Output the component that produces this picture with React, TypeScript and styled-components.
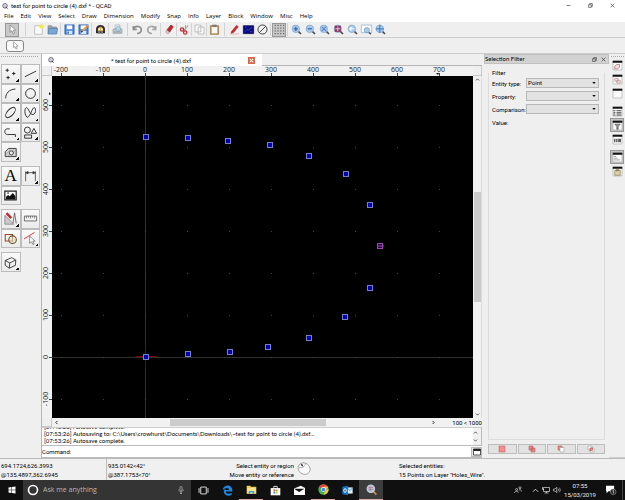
import React from "react";
import styled, { createGlobalStyle, css } from "styled-components";

const Global = createGlobalStyle`
  * { box-sizing: border-box; }
  html, body { margin: 0; padding: 0; }
  body { background: #efefef; color: #000; font: 6px/9px Roboto, "Open Sans", sans-serif; }
  button, input, select { font: inherit; color: inherit; margin: 0; padding: 0; }
`;

/* ---------- icons ---------- */

const Svg = styled.svg<{ $size?: number }>`
  display: block;
  flex: none;
  width: ${(p) => p.$size ?? 12}px;
  height: ${(p) => p.$size ?? 12}px;
  overflow: visible;
`;

const lens = (inner: React.ReactNode) => (
  <>
    <path d="M10 10l4.5 4.5" stroke="#4a4a4a" strokeWidth="2.4" />
    <circle cx="7" cy="7" r="5.4" fill="#a9cbee" stroke="#86a9cf" strokeWidth="1.2" />
    {inner}
  </>
);

const docFrame = (inner: React.ReactNode) => (
  <>
    <path d="M1.5 2h13v12.500h-13z" fill="#fff" stroke="#aaa" />
    <path d="M1 1h14v3h-14z" fill="#111" />
    {inner}
  </>
);

const icons: Record<string, React.ReactNode> = {
  app: (
    <>
      <circle cx="8" cy="7.500" r="6" fill="#eef" stroke="#334" strokeWidth="2" />
      <path d="M5 5h5v5h-5z" fill="#c5cbdc" />
      <path d="M10 10l4.500 5" stroke="#334" strokeWidth="2.600" />
    </>
  ),
  cursor: <path d="M4.500 1.500v10.500l2.600-2.200 2 4.400 2-1-2-4.200 3.600-.2z" fill="#fff" stroke="#888" strokeWidth="1.200" />,
  newDoc: (
    <>
      <path d="M2.500 2.500h11v12.500h-11z" fill="#fbfbfb" stroke="#aaa" />
      <circle cx="12.500" cy="3.500" r="3.200" fill="#f4e74a" />
    </>
  ),
  open: (
    <>
      <path d="M1.500 2.500h5l1.500 2h6v9.500h-12.500z" fill="#9aa3a8" stroke="#7d868b" />
      <path d="M3 6.500h12.500l-1.500 8h-12.500z" fill="#78a6d8" stroke="#4c7eb8" />
    </>
  ),
  save: (
    <>
      <path d="M1.500 1.500h13v13h-13z" fill="#4f8be0" stroke="#2a5fb4" strokeWidth="1.500" />
      <path d="M4 2h8v5.500h-8z" fill="#fff" />
      <path d="M4 10h8v4.500h-8z" fill="#dbe6f6" />
      <path d="M5 11h2v3h-2z" fill="#2a5fb4" />
    </>
  ),
  saveAs: (
    <>
      <path d="M1.500 1.500h13v13h-13z" fill="#4f8be0" stroke="#2a5fb4" strokeWidth="1.500" />
      <path d="M4 2h8v5.500h-8z" fill="#fff" />
      <path d="M4 10h8v4.500h-8z" fill="#dbe6f6" />
      <path d="M6 10.500l8.500-8.500" stroke="#e99a2e" strokeWidth="2.600" />
      <path d="M4.500 12l2-2" stroke="#333" strokeWidth="2" />
    </>
  ),
  preview: (
    <>
      <path d="M1.500 13.500v-6c0-8 13-8 13 0v6z" fill="#2c2926" />
      <path d="M4 10.500c0-5 2-6.500 4-6.500s4 1.500 4 6.500z" fill="#d4aa4e" />
      <path d="M4.500 14v-4h3v4zM8.500 14v-4h3v4z" fill="#777" />
      <circle cx="6" cy="7.500" r="1.300" fill="#fff" />
      <circle cx="10" cy="7.500" r="1.300" fill="#fff" />
    </>
  ),
  print: (
    <>
      <path d="M4.500 1.500h7v6h-7z" fill="#f6fafe" stroke="#9ab" />
      <path d="M1.500 7.500h13v6h-13z" fill="#c9ced2" stroke="#8a9298" />
      <circle cx="9" cy="7" r="3.500" fill="#b7d4ee" stroke="#8aa" />
      <path d="M3 11.500h10" stroke="#7d868b" />
    </>
  ),
  undo: <path d="M2 3v5h5M2.500 7.500c2-6 11.500-5 11 1.500-.2 3-3 5-6 4.500" fill="none" stroke="#8c8c8c" strokeWidth="2.400" />,
  redo: <path d="M14 3v5h-5M13.500 7.500c-2-6-11.500-5-11 1.500 .2 3 3 5 6 4.500" fill="none" stroke="#a5a5a5" strokeWidth="2.400" />,
  eraser: (
    <>
      <path d="M4 9l6-7.500 3.500 2.500-5.500 8z" fill="#c6262e" stroke="#8c1a20" />
      <path d="M4 9l4 3-2 2.500-3.500-2.500z" fill="#f4c9cb" stroke="#999" />
    </>
  ),
  cut: (
    <>
      <path d="M13.500 2l-6 7M9.500 1.500l-.5 9" stroke="#aaa" strokeWidth="1.600" />
      <circle cx="4.500" cy="8" r="2.400" fill="none" stroke="#c6262e" strokeWidth="1.800" />
      <circle cx="9" cy="12.500" r="2.400" fill="none" stroke="#c6262e" strokeWidth="1.800" />
    </>
  ),
  copy: <path d="M1.500 1.500h8.500v10h-8.500zM6 4.500h8.500v10h-8.500z" fill="#fafafa" stroke="#aaa" />,
  paste: (
    <>
      <path d="M2 2.500h12v12.500h-12z" fill="#c69c5c" stroke="#8b6a38" />
      <path d="M4 4.500h8v9h-8z" fill="#f8f8f6" />
      <path d="M5 1h6v3h-6z" fill="#777" />
    </>
  ),
  pen: (
    <>
      <path d="M4 10.500l7-8.500 2.500 2-7 8.500-3.500 1z" fill="#d0242c" stroke="#8c1a20" strokeWidth=".8" />
      <path d="M1.500 14.500h13" stroke="#d99" />
    </>
  ),
  blueprint: (
    <>
      <path d="M.5 2.500h15v11.500h-15z" fill="#0a0a86" stroke="#04043c" />
      <path d="M3 11l3-3 2 1 5-4M3 5h2M10 11h3" stroke="#4a56c0" fill="none" />
    </>
  ),
  draft: (
    <>
      <circle cx="8" cy="8" r="6.600" fill="none" stroke="#222" strokeWidth="1.200" />
      <path d="M3.300 12.700l9.400-9.400" stroke="#222" strokeWidth="1.200" />
    </>
  ),
  grid: (
    <path
      d="M1 2h14M1 6h14M1 10h14M1 14h14"
      stroke="#555"
      strokeWidth="1.500"
      strokeDasharray="1.500 2.600"
    />
  ),
  zoomIn: lens(<path d="M4 7h6M7 4v6" stroke="#2e66b4" strokeWidth="1.800" />),
  zoomOut: lens(<path d="M4 7h6" stroke="#2e66b4" strokeWidth="1.800" />),
  zoomAuto: lens(<path d="M4 4l6 6M10 4l-6 6" stroke="#4a82c8" strokeWidth="1.500" />),
  zoomSel: lens(
    <>
      <path d="M2.500 2.500h9v9h-9z" fill="#8c3560" />
      <path d="M3.500 7h7M7 3.500v7" stroke="#e5d4e4" strokeWidth="1.300" />
    </>
  ),
  zoomPrev: lens(<path d="M10 7h-5.500M6.500 4.500l-2.500 2.500 2.500 2.500" stroke="#fff" fill="none" strokeWidth="1.500" />),
  zoomWin: (
    <>
      <path d="M.5 1.500h15v11h-15z" fill="#fff" stroke="#8aa8c8" />
      <path d="M11 12l3.500 3" stroke="#4a4a4a" strokeWidth="2" />
      <circle cx="8.500" cy="9" r="3.800" fill="#a9cbee" stroke="#6a95c5" />
    </>
  ),
  zoomPan: lens(<path d="M1 7h12M7 1v12" stroke="#4a82c8" strokeWidth="1.800" />),
  points: <path d="M2 4h4M4 2v4M10 8h4M12 6v4M3 13h4M5 11v4" stroke="#222" strokeWidth="1.200" />,
  line: <path d="M1 12l14-7" stroke="#333" strokeWidth="1.200" />,
  arc: <path d="M2 14c0-6 4-11 12-11.500" fill="none" stroke="#333" strokeWidth="1.200" />,
  circle: <circle cx="8" cy="8" r="6" fill="none" stroke="#333" strokeWidth="1.200" />,
  ellipse: <ellipse cx="8" cy="8" rx="7.800" ry="3.800" transform="rotate(-48 8 8)" fill="none" stroke="#333" strokeWidth="1.200" />,
  spline: <path d="M4 14c-4-3-3.500-12-1-12s4 9 8 8.500c4-.5 4-8.500 1.500-8.500s-4.500 11-8.500 12z" fill="none" stroke="#333" strokeWidth="1.200" />,
  polyline: <path d="M7 3.500h-3c-4 0-4 7 0 7h10v3" fill="none" stroke="#333" strokeWidth="1.200" />,
  shapes: (
    <path
      d="M.5 5a3.700 3.700 0 1 0 7.400 0a3.700 3.700 0 1 0-7.400 0zM12.200 3l3.300 6h-6.600zM.8 11h8.500v4h-8.500z"
      fill="none"
      stroke="#333"
      strokeWidth="1.200"
    />
  ),
  hatch: (
    <>
      <path d="M1.500 13v-6l4-4h9.500v10z" fill="#d4d4d4" stroke="#333" strokeWidth="1.100" />
      <path d="M2 11l6-7M4 13l8-9M8 13l6-8" stroke="#888" strokeWidth=".7" />
      <circle cx="9" cy="8.500" r="2.500" fill="#eee" stroke="#333" />
    </>
  ),
  dimension: (
    <path d="M2 3v12M14 3v12M2 4.500h12M2 4.500l3-1.500v3zM14 4.500l-3-1.500v3z" fill="#222" stroke="#444" />
  ),
  image: (
    <>
      <path d="M1 2.500h14v11h-14z" fill="#fff" stroke="#222" strokeWidth="1.500" />
      <path d="M2.500 12.500v-3l2.500-2 2 1.500 4-4 3 4v3.500z" fill="#111" />
      <circle cx="5" cy="5" r="1" fill="#111" />
    </>
  ),
  modify: (
    <>
      <path d="M1 4v11h11z" fill="#c9c9c9" stroke="#888" />
      <path d="M3 1.500l6 6" stroke="#c6262e" strokeWidth="3" />
      <path d="M13 1l-2 13M13 1l2 13" stroke="#555" fill="none" />
    </>
  ),
  ruler: (
    <>
      <path d="M.5 5h15v6h-15z" fill="#f4f4f4" stroke="#555" />
      <path d="M3 5v3M5.500 5v2M8 5v3M10.500 5v2M13 5v3" stroke="#555" strokeWidth=".8" />
    </>
  ),
  combine: (
    <>
      <path d="M1.500 3h9v8h-9z" fill="none" stroke="#9a4a2c" strokeWidth="1.300" />
      <circle cx="10.500" cy="9.500" r="4.700" fill="#e8e0b8" fillOpacity=".6" stroke="#5c5530" strokeWidth="1.300" />
    </>
  ),
  trim: (
    <>
      <path d="M0 8.500l13-8" stroke="#e0333c" strokeWidth="1.200" />
      <path d="M7 5v9l2.200-2 1.800 3.500 1.500-.8-1.700-3.500h2.800z" fill="#fff" stroke="#777" />
    </>
  ),
  cube: <path d="M1.500 5.500l8-3.500 5 3-.5 6.500-7.500 3.500-5-3.500zM1.500 5.500l5.500 3 7.500-3.500M7 8.500l-.5 6.500" fill="none" stroke="#333" strokeWidth="1.100" />,
  blocks: docFrame(<path d="M4 9l3-2.500h4v4l-3 2.500h-4z" fill="#f3dede" stroke="#a66" />),
  layers: docFrame(<path d="M4 6.500h5v4h-5zM7 9h5v4h-5z" fill="#eee" stroke="#b88" />),
  blank: docFrame(<path d="M4 7h8v5h-8z" fill="none" stroke="#eee" />),
  list: docFrame(<path d="M2 7h3M6.500 7h7M2 10h3M6.500 10h7M2 13h3M6.500 13h7" stroke="#444" strokeWidth="1.500" />),
  filter: docFrame(<path d="M4 6h8l-3 3.500v4h-2v-4z" fill="#999" stroke="#555" />),
  library: docFrame(<path d="M3 7h2v5h-2zM6 7h2v5h-2zM9 7h4v5h-4z" fill="#555" />),
  command: docFrame(<path d="M3 6.500h3M3 9h5M3 11.500h9" stroke="#777" />),
  clip: docFrame(<path d="M4 6.500h8v7h-8zM6 5h4v2h-4z" fill="#ddd1b0" stroke="#8b7a50" />),
  sel1: <path d="M2 2h12v12h-12z" fill="#f98a8d" stroke="#b95a5e" />,
  sel2: (
    <>
      <path d="M2 2h8v8h-8zM6 6h8v8h-8z" fill="#f2898c" stroke="#a04a4e" />
      <path d="M6 6h4v4h-4z" fill="#d9666a" />
    </>
  ),
  sel3: (
    <>
      <path d="M2 2h8v8h-8z" fill="#f2898c" stroke="#a04a4e" />
      <path d="M6 5h8v9h-8z" fill="#fff" stroke="#888" />
    </>
  ),
  sel4: (
    <>
      <path d="M2 2h8v8h-8zM6 6h8v8h-8z" fill="#fff" stroke="#888" />
      <path d="M6 6h5v5h-5z" fill="#f2898c" stroke="#a04a4e" />
    </>
  ),
  minimize: <path d="M2 8h12" stroke="#222" strokeWidth="1.800" />,
  restore: <path d="M2 5.500h8.500v8.500h-8.500zM5 5v-3h9v9h-3" fill="none" stroke="#222" strokeWidth="1.800" />,
  close: <path d="M2 2l12 12M14 2l-12 12" stroke="#222" strokeWidth="2" />,
  closeWhite: <path d="M4 4l8 8M12 4l-8 8" stroke="#fff" strokeWidth="2.400" />,
  up: <path d="M3 11l5-5 5 5" fill="none" stroke="#333" strokeWidth="2.600" />,
  down: <path d="M3 5l5 5 5-5" fill="none" stroke="#333" strokeWidth="2.600" />,
  left: <path d="M11 3l-5 5 5 5" fill="none" stroke="#111" strokeWidth="2.800" />,
  right: <path d="M5 3l5 5-5 5" fill="none" stroke="#111" strokeWidth="2.800" />,
  arrow: <path d="M1 4h14l-7 8z" fill="#111" />,
  panel: (
    <>
      <path d="M1 2h14v12h-14z" fill="#fff" stroke="#222" strokeWidth="1.500" />
      <path d="M1 2h14v4h-14z" fill="#222" />
    </>
  ),
  mouse: (
    <>
      <ellipse cx="8.500" cy="8.500" rx="7.200" ry="6.300" transform="rotate(35 8 8)" fill="#f9f9f9" stroke="#999" strokeWidth=".9" />
      <path d="M2.500 7.500c3 1 6.500-1 7.500-5M6.500 7l-2.500-4" fill="none" stroke="#999" strokeWidth=".9" />
      <path d="M5 3.500l1.500 2.200" stroke="#333" strokeWidth="1.500" />
    </>
  ),
  windows: <path d="M1 3l6-.9v5.500h-6zM8 2l7-1v6.600h-7zM1 8.500h6v5.500l-6-.9zM8 8.500h7v6.500l-7-1z" fill="#fff" />,
  cortana: <circle cx="8" cy="8" r="6" fill="none" stroke="#fff" strokeWidth="2.200" />,
  mic: <path d="M6 2.500c0-2 4-2 4 0v5c0 2-4 2-4 0zM3.500 7c0 6 9 6 9 0M8 11.500v3.500M6 15h4" fill="none" stroke="#ccc" strokeWidth="1.200" />,
  taskview: <path d="M4 3h8v10h-8zM1.500 4.500v7M14.500 4.500v7" fill="none" stroke="#ddd" strokeWidth="1.400" />,
  edge: (
    <path
      d="M1 7.500c1-9 14-9 14 .5v1.500h-9.500c.3 3.500 5 4 8.500 2v3c-5 2.500-11.500.5-11.500-5 0-2 1-3.500 3-4.500-.8 1-.8 1.800-.8 2.200h5.500c0-4-5.500-4-9.200.3z"
      fill="#1f86e0"
    />
  ),
  folder: (
    <>
      <path d="M1 2.500h5l1.500 1.500h7.500v10h-14z" fill="#f2cc58" />
      <path d="M2 6h12v8h-12z" fill="#fbe694" />
      <path d="M4 14v-4h8v4h-2.500v-2h-3v2z" fill="#3f9ad8" />
    </>
  ),
  store: (
    <>
      <path d="M5.500 5v-3h5v3" fill="none" stroke="#fff" strokeWidth="1.200" />
      <path d="M1 4.500h14v10.500h-14z" fill="#fff" />
      <path d="M5 6.500h2.700v2.700h-2.700z" fill="#e2502c" />
      <path d="M8.300 6.500h2.700v2.700h-2.700z" fill="#7cb82f" />
      <path d="M5 9.800h2.700v2.700h-2.700z" fill="#2c9fe0" />
      <path d="M8.300 9.800h2.700v2.700h-2.700z" fill="#f3b52c" />
    </>
  ),
  mail: (
    <>
      <path d="M0 5l10-4 6 3.500v10h-16z" fill="#fff" />
      <path d="M0 5.500h15l-7.500 4.500z" fill="#111" />
    </>
  ),
  chrome: (
    <>
      <circle cx="8" cy="8" r="7.500" fill="#4caf50" />
      <path d="M8 8l-6.500-3.800c3-5 10-5 13 0z" fill="#e2453a" />
      <path d="M8 8h7.500c.3-1.500-.2-3-1-3.900h-6.500zM8 15.500l6.700-11.400c2.500 5-1 11.400-6.700 11.400z" fill="#fbc92f" />
      <circle cx="8" cy="8" r="3.500" fill="#fff" />
      <circle cx="8" cy="8" r="2.700" fill="#4286f0" />
    </>
  ),
  outlook: (
    <>
      <path d="M7 3.500h8.500v9h-8.500z" fill="#dbeafa" />
      <path d="M7 4l4.500 4 4-4" fill="none" stroke="#1272c6" />
      <path d="M.5 2.500l8-1.500v14l-8-1.500z" fill="#1272c6" />
      <ellipse cx="4.500" cy="8" rx="1.900" ry="2.600" fill="none" stroke="#fff" strokeWidth="1.300" />
    </>
  ),
  qcad: (
    <>
      <path d="M10.500 10.500l4.500 5" stroke="#c98f3c" strokeWidth="2.500" />
      <circle cx="7" cy="7" r="5.500" fill="#aebfe0" stroke="#ccd" strokeWidth="1.500" />
      <path d="M4 5h6M4 8h6M6 4v6" stroke="#c26a6a" />
    </>
  ),
  people: <path d="M1 14c1-5 7-5 7.500-.5M3.200 7a2 2 0 1 0 4 0a2 2 0 1 0-4 0M10 3.500a2 2 0 1 0 4 0a2 2 0 1 0-4 0M9.500 9c2-2.500 5-2 5.500 2" fill="none" stroke="#ddd" strokeWidth="1.400" />,
  chevron: <path d="M2 11l6-6 6 6" fill="none" stroke="#ddd" strokeWidth="2" />,
  network: <path d="M3 3h12v8h-12zM9 11v3M5 14h8M1 2v5h3" fill="none" stroke="#ddd" strokeWidth="1.400" />,
  sound: <path d="M1 6h3l3.500-3.500v11l-3.500-3.500h-3zM10 5.500c1.500 1.500 1.500 3.500 0 5M12.500 3.500c2.500 2.500 2.500 6.500 0 9" fill="none" stroke="#ddd" strokeWidth="1.300" />,
  action: (
    <>
      <path d="M0 1h13v9h-9l-3 3v-3h-1z" fill="#fff" />
      <circle cx="11.500" cy="11" r="4.500" fill="#222" stroke="#999" />
      <path d="M10.500 9.500l1.300-1v5" fill="none" stroke="#fff" />
    </>
  ),
};

const Icon = ({ name, size }: { name: string; size?: number }) => (
  <Svg viewBox="0 0 16 16" $size={size} aria-hidden="true">
    {icons[name]}
  </Svg>
);

/* ---------- frame ---------- */

const Page = styled.div`
  min-height: 100vh;
  display: flex;
  flex-direction: column;
`;

const PlainButton = styled.button`
  display: flex;
  align-items: center;
  justify-content: center;
  border: 0;
  background: none;
`;

const TitleBar = styled.header`
  display: flex;
  align-items: center;
  gap: 3px;
  height: 11px;
  padding: 0 10px 0 2px;
  background: #fff;
`;

const Title = styled.h1`
  flex: 1;
  margin: 0;
  font-size: 6px;
  font-weight: 400;
`;

const WindowButtons = styled.div`
  display: flex;
  gap: 17px;
`;

const MenuBar = styled.nav`
  display: flex;
  align-items: center;
  gap: 7px;
  height: 11px;
  padding-left: 4px;
  background: #fff;
  font-family: "Open Sans", sans-serif;
`;

const MenuItem = styled(PlainButton)`
  height: 9px;
  white-space: nowrap;
`;

const ToolBar = styled.div<{ $small?: boolean }>`
  display: flex;
  align-items: center;
  height: 16px;
  padding-left: ${(p) => (p.$small ? 6 : 5)}px;
  border-bottom: 1px solid #cdcdcd;
  background: #efefef;
`;

const ToolButton = styled(PlainButton)<{ $pressed?: boolean }>`
  width: 14px;
  height: 14px;
  ${(p) =>
    p.$pressed &&
    css`
      background: #c8c8c8;
      border: 1px solid #999;
    `}
`;

const ModeButton = styled(PlainButton)`
  width: 18px;
  height: 12px;
  border: 1px solid #888;
  border-radius: 3px;
  background: #f8f8f8;
`;

const Separator = styled.span<{ $width: number }>`
  width: ${(p) => p.$width}px;
  height: 13px;
  flex: none;
  background: linear-gradient(#d2d2d2, #d2d2d2) center / 1px 100% no-repeat;
`;

const Work = styled.div`
  flex: 1;
  display: flex;
  min-height: 0;
`;

/* ---------- left tools ---------- */

const ToolBox = styled.aside`
  display: flex;
  flex-direction: column;
  gap: 4px;
  width: 41px;
  padding: 2px 1px 0;
`;

const Grip = styled.span<{ $width: number; $height: number }>`
  width: ${(p) => p.$width}px;
  height: ${(p) => p.$height}px;
  border-top: 1px dotted #aaa;
`;

const ToolGroup = styled.div<{ $rows: number; $height: number }>`
  display: grid;
  grid-template: repeat(${(p) => p.$rows}, 1fr) / 1fr 1fr;
  height: ${(p) => p.$height}px;
`;

const BoxButton = styled(PlainButton)<{ $menu: boolean }>`
  border: 1px solid #bcbcbc;
  background: ${(p) => (p.$menu ? "linear-gradient(135deg, transparent 50%, #111 50%) right 1px bottom 1px / 3px 3px no-repeat, " : "")}
    linear-gradient(#f9f9f9, #ebebeb);
`;

const Letter = styled.span`
  font: 17px/17px "Liberation Serif", serif;
`;

/* ---------- document ---------- */

const Center = styled.main`
  flex: 1;
  min-width: 0;
  display: flex;
  flex-direction: column;
  border-left: 1px solid #b5b5b5;
  margin-right: 2px;
`;

const TabBar = styled.div`
  display: flex;
  height: 12px;
  border-bottom: 1px solid #b5b5b5;
`;

const Tab = styled.div`
  display: flex;
  align-items: center;
  flex: 0 1 220px;
  height: 12px;
  padding: 0 7px 0 6px;
  background: #fff;
`;

const TabTitle = styled.span`
  flex: 1;
  text-align: center;
`;

const TabClose = styled(PlainButton)`
  width: 7px;
  height: 7px;
  background: #d9694a;
`;

const Sheet = styled.div`
  flex: 1;
  display: grid;
  grid-template: 10px minmax(0, 1fr) 9px / 10px minmax(0, 1fr) 9px;
  min-height: 0;
`;

const Drawing = styled.svg<{ $black?: boolean }>`
  display: block;
  width: 100%;
  height: 100%;
  min-height: 0;
  background: ${(p) => (p.$black ? "#000" : "#f1f1f1")};
  font: 7px "Open Sans", sans-serif;
`;

const Corner = styled.span`
  border: solid #c8c8c8;
  border-width: 0 1px 1px 0;
`;

const VTrack = styled.div`
  display: flex;
  flex-direction: column;
  align-items: center;
  padding: 1px 0;
  background: #f1f1f1;
  border-right: 1px solid #ddd;
`;

const HTrack = styled.div`
  grid-column: 2 / 4;
  display: flex;
  align-items: center;
  padding-left: 2px;
  background: #f1f1f1;
`;

const Spacer = styled.span<{ $grow: number }>`
  flex: ${(p) => p.$grow} 1 0;
`;

const Thumb = styled.span<{ $grow: number; $vertical?: boolean }>`
  flex: ${(p) => p.$grow} 1 0;
  ${(p) => (p.$vertical ? "width: 7px;" : "height: 7px;")}
  background: #cbcbcb;
`;

const GridInfo = styled.span`
  width: 46px;
  text-align: right;
`;

const Log = styled.section`
  display: flex;
  height: 19px;
  background: #fff;
  border-top: 1px solid #ccc;
  border-bottom: 1px solid #bbb;
  border-right: 1px solid #bbb;
`;

const LogText = styled.div`
  flex: 1;
  display: flex;
  flex-direction: column;
  justify-content: flex-end;
  overflow: hidden;
  padding: 0 0 1px 2px;
  font: 6px/7px Lato, sans-serif;
  white-space: nowrap;
`;

const LogScroll = styled.div`
  display: flex;
  flex-direction: column;
  justify-content: space-around;
  width: 8px;
  background: #f1f1f1;
`;

const CommandRow = styled.label`
  display: flex;
  align-items: center;
  height: 12px;
  background: #fff;
  border-bottom: 1px solid #bbb;
`;

const CommandInput = styled.input`
  flex: 1;
  min-width: 0;
  height: 9px;
  margin-left: 3px;
  border: 0;
  outline: 0;
`;

const CommandButton = styled(PlainButton)`
  width: 11px;
  height: 10px;
  background: #e4e4e4;
  border: 1px solid #bbb;
`;

/* ---------- selection filter ---------- */

const Dock = styled.aside`
  display: flex;
  flex-direction: column;
  width: 125px;
`;

const DockTitle = styled.header`
  display: flex;
  align-items: center;
  gap: 4px;
  height: 10px;
  padding: 0 2px 0 0;
  background: #d2d2d2;
  border: 1px solid #c0c0c0;
`;

const DockName = styled.h2`
  flex: 1;
  margin: 0;
  font: 400 6px/8px Lato, sans-serif;
`;

const FilterBox = styled.fieldset`
  flex: 1;
  margin: 4px 4px 4px;
  padding: 1px 5px 1px 3px;
  border: 1px solid #dcdcdc;
  border-width: 0 1px 1px;
`;

const Legend = styled.legend`
  padding: 0;
`;

const Fields = styled.div`
  display: grid;
  grid-template-columns: 34px 1fr;
  grid-auto-rows: 10px;
  row-gap: 3px;
  align-items: center;
`;

const SelectWrap = styled.span`
  position: relative;
  display: block;
  height: 10px;
`;

const Select = styled.select`
  appearance: none;
  display: block;
  width: 100%;
  height: 10px;
  padding-left: 1px;
  border: 1px solid #b8b8b8;
  border-radius: 0;
  background: #e2e2e2;
  line-height: 8px;
`;

const SelectArrow = styled.span`
  position: absolute;
  right: 3px;
  top: 3px;
  pointer-events: none;
`;

const Actions = styled.div`
  display: grid;
  grid-template-columns: repeat(4, 1fr);
  gap: 1px;
  padding: 0 4px;
  margin-bottom: 4px;
`;

const ActionButton = styled(PlainButton)`
  height: 10px;
  background: #e2e2e2;
  border: 1px solid #bdbdbd;
`;

const SideBar = styled.aside`
  display: flex;
  flex-direction: column;
  align-items: center;
  width: 16px;
  padding-top: 2px;
  border-bottom: 1px solid #ccc;
`;

const SideButton = styled(PlainButton)<{ $pressed?: boolean; $gap?: boolean }>`
  width: 14px;
  height: 14px;
  margin-top: ${(p) => (p.$gap ? 4 : 0)}px;
  ${(p) =>
    p.$pressed &&
    css`
      background: #c4c4c4;
      border: 1px solid #999;
    `}
`;

/* ---------- status and task bars ---------- */

const Status = styled.footer`
  display: grid;
  grid-template-columns: 107px 187px 104px 1fr;
  height: 22px;
  border-top: 1px solid #bbb;
  background: #f0f0f0;
`;

const StatusCell = styled.div<{ $right?: boolean; $line?: boolean }>`
  display: flex;
  flex-direction: column;
  justify-content: center;
  padding-left: 1px;
  white-space: nowrap;
  text-align: ${(p) => (p.$right ? "right" : "left")};
  border-right: ${(p) => (p.$line ? "1px solid #bbb" : "0")};
`;

const StatusSplit = styled.div`
  display: flex;
  align-items: center;
  justify-content: space-between;
`;

const MouseCell = styled.div`
  padding: 2px 0 0 3px;
`;

const TaskBar = styled.footer`
  display: flex;
  align-items: stretch;
  height: 20px;
  background: #101010;
  color: #eee;
`;

const StartButton = styled(PlainButton)`
  width: 23px;
`;

const SearchBox = styled.label`
  display: flex;
  align-items: center;
  width: 168px;
  gap: 4px;
  padding: 0 6px 0 4px;
  background: #343434;
`;

const SearchInput = styled.input`
  flex: 1;
  min-width: 0;
  border: 0;
  outline: 0;
  background: none;
  font: 7px/10px "Open Sans", sans-serif;
  &::placeholder {
    color: #b8b8b8;
    opacity: 1;
  }
`;

const TaskButton = styled(PlainButton)<{ $open?: boolean; $active?: boolean }>`
  width: 24px;
  background: ${(p) => (p.$active ? "#3c3c3c" : "none")};
  border-bottom: ${(p) => (p.$open ? "1px solid #e0a8a8" : "0")};
`;

const Tray = styled.div`
  display: flex;
  align-items: center;
  gap: 3px;
  margin-left: auto;
`;

const PeopleButton = styled(PlainButton)`
  margin-right: 7px;
`;

const Clock = styled.time`
  width: 32px;
  text-align: center;
`;

const NoticeButton = styled(PlainButton)`
  width: 24px;
  height: 20px;
  border-right: 1px solid #444;
  margin-right: 2px;
`;

/* ---------- data ---------- */

const menus = ["File", "Edit", "View", "Select", "Draw", "Dimension", "Modify", "Snap", "Info", "Layer", "Block", "Window", "Misc", "Help"];

const tools: (string | number)[] = [
  "cursor", 12, "newDoc", "open", 3, "save", "saveAs", 3, "preview", 3, "print", 6, "undo", "redo", 4,
  "eraser", 1, "cut", 1, "copy", 1, "paste", 6, "pen", "blueprint", "draft", 3, "grid", 3,
  "zoomIn", "zoomOut", "zoomAuto", "zoomSel", "zoomPrev", "zoomWin", "zoomPan",
];

const boxGroups = [
  { rows: 5, height: 98, items: ["points", "line", "arc", "circle", "ellipse", "spline", "polyline", "shapes", "hatch"] },
  { rows: 2, height: 39, items: ["text", "dimension", "image"] },
  { rows: 2, height: 39, items: ["modify", "ruler", "combine", "trim"] },
  { rows: 1, height: 20, items: ["cube"] },
];
const noMenu = ["text", "image", "ruler", "combine"];

const sideTools = ["blocks", "layers", "blank", "list", "filter", "library", "command", "clip"];

/* Drawing units: 42 px per 100, origin at (94, 281) on the sheet. */
const STEP = 42;
const OX = 94;
const OY = 281;
const columns = [-2, -1, 0, 1, 2, 3, 4, 5, 6, 7];
const rows = [-1, 0, 1, 2, 3, 4, 5, 6];
const points = [
  [94, 61], [136, 62], [176, 65], [218, 69], [257, 80], [294, 98], [318, 129], [318, 212],
  [293, 241], [257, 262], [216, 271], [178, 276], [136, 278], [94, 281],
];

const selectRows = [
  { id: "entity", label: "Entity type:", value: "Point" },
  { id: "property", label: "Property:", value: "" },
  { id: "comparison", label: "Comparison:", value: "" },
];

const apps = [
  { name: "taskview" }, { name: "edge" }, { name: "folder", open: true }, { name: "store" }, { name: "mail" },
  { name: "chrome", open: true }, { name: "outlook" }, { name: "qcad", open: true, active: true },
];

const Canvas = () => (
  <Drawing $black role="img" aria-label="Drawing">
    <path d={`M${OX - 0.5} 0v2000M0 ${OY + 0.5}h3000`} stroke="#303030" />
    {rows.map((r) =>
      columns.map((c) => (
        <rect key={`${r} ${c}`} x={OX + c * STEP - 1} y={OY - r * STEP} width="1" height="1" fill="#444" />
      ))
    )}
    <path d={`M${OX - 10} ${OY - 0.5}h21M${OX - 0.5} ${OY - 10}v21`} stroke="#800000" />
    {points.map(([x, y]) => (
      <rect key={`${x} ${y}`} x={x - 2.5} y={y - 2.5} width="5" height="5" fill="#0000b4" stroke="#7a80c8" />
    ))}
    <rect x="325.500" y="167.500" width="5" height="5" fill="#280050" stroke="#9848a8" />
    <path d="M326 170h6" stroke="#9848a8" />
  </Drawing>
);

const TopRuler = () => (
  <Drawing aria-hidden="true">
    {columns.map((c) => (
      <g key={c}>
        <text x={OX + c * STEP - 1} y="6" textAnchor="middle" fill="#222">{c * 100}</text>
        <path d={`M${OX + c * STEP - 0.5} 7v3`} stroke="#444" />
      </g>
    ))}
    <path d="M384 7h3l-1 2z" fill="#111" />
  </Drawing>
);

const LeftRuler = () => (
  <Drawing aria-hidden="true">
    {rows.map((r) => (
      <g key={r}>
        <text transform={`translate(6 ${OY - r * STEP}) rotate(-90)`} textAnchor="middle" fill="#222">{r * 100}</text>
        <path d={`M7 ${OY - r * STEP + 0.5}h3`} stroke="#444" />
      </g>
    ))}
    <path d="M7 16v3l2-1z" fill="#111" />
  </Drawing>
);

export default function App() {
  return (
    <Page>
      <Global />
      <TitleBar>
        <Icon name="app" size={6} />
        <Title>test for point to circle (4).dxf * - QCAD</Title>
        <WindowButtons>
          {["minimize", "restore", "close"].map((n) => (
            <PlainButton key={n} aria-label={n}><Icon name={n} size={5} /></PlainButton>
          ))}
        </WindowButtons>
      </TitleBar>
      <MenuBar>
        {menus.map((m) => <MenuItem key={m}>{m}</MenuItem>)}
      </MenuBar>
      <ToolBar>
        {tools.map((t, i) =>
          typeof t === "number" ? (
            <Separator key={i} $width={t} />
          ) : (
            <ToolButton key={i} aria-label={t} $pressed={t === "cursor" || t === "grid"}><Icon name={t} size={11} /></ToolButton>
          )
        )}
      </ToolBar>
      <ToolBar $small>
        <ModeButton aria-label="Selection mode"><Icon name="cursor" size={9} /></ModeButton>
      </ToolBar>
      <Work>
        <ToolBox>
          <Grip $width={37} $height={4} />
          {boxGroups.map((g) => (
            <ToolGroup key={g.items[0]} $rows={g.rows} $height={g.height}>
              {g.items.map((n) => (
                <BoxButton key={n} aria-label={n} $menu={!noMenu.includes(n)}>
                  {n === "text" ? <Letter>A</Letter> : <Icon name={n} size={13} />}
                </BoxButton>
              ))}
            </ToolGroup>
          ))}
        </ToolBox>
        <Center>
          <TabBar>
            <Tab>
              <Icon name="app" size={6} />
              <TabTitle>* test for point to circle (4).dxf</TabTitle>
              <TabClose aria-label="Close tab"><Icon name="closeWhite" size={7} /></TabClose>
            </Tab>
          </TabBar>
          <Sheet>
            <Corner />
            <TopRuler />
            <Corner />
            <LeftRuler />
            <Canvas />
            <VTrack>
              <Icon name="up" size={5} />
              <Spacer $grow={110} />
              <Thumb $grow={111} $vertical />
              <Spacer $grow={110} />
              <Icon name="down" size={5} />
            </VTrack>
            <Corner />
            <HTrack>
              <Icon name="left" size={5} />
              <Spacer $grow={111} />
              <Thumb $grow={157} />
              <Spacer $grow={105} />
              <Icon name="right" size={5} />
              <GridInfo>100 &lt; 1000</GridInfo>
            </HTrack>
          </Sheet>
          <Log>
            <LogText>
              <span>[07:40:26] Autosave complete.</span>
              <span>[07:53:26] Autosaving to: C:\Users\crowhurst\Documents\Downloads\~test for point to circle (4).dxf...</span>
              <span>[07:53:26] Autosave complete.</span>
            </LogText>
            <LogScroll>
              <Icon name="up" size={5} />
              <Icon name="down" size={5} />
            </LogScroll>
          </Log>
          <CommandRow>
            Command:
            <CommandInput />
            <CommandButton aria-label="Toggle history"><Icon name="panel" size={8} /></CommandButton>
          </CommandRow>
        </Center>
        <Dock>
          <DockTitle>
            <DockName>Selection Filter</DockName>
            <PlainButton aria-label="Float"><Icon name="restore" size={5} /></PlainButton>
            <PlainButton aria-label="Close"><Icon name="close" size={5} /></PlainButton>
          </DockTitle>
          <FilterBox>
            <Legend>Filter</Legend>
            <Fields>
              {selectRows.map((r) => (
                <React.Fragment key={r.id}>
                  <label htmlFor={r.id}>{r.label}</label>
                  <SelectWrap>
                    <Select id={r.id}><option>{r.value}</option></Select>
                    <SelectArrow><Icon name="arrow" size={4} /></SelectArrow>
                  </SelectWrap>
                </React.Fragment>
              ))}
              <span>Value:</span>
            </Fields>
          </FilterBox>
          <Actions>
            {["sel1", "sel2", "sel3", "sel4"].map((n) => (
              <ActionButton key={n} aria-label={n}><Icon name={n} size={8} /></ActionButton>
            ))}
          </Actions>
        </Dock>
        <SideBar>
          <Grip $width={13} $height={2} />
          {sideTools.map((n) => (
            <SideButton key={n} aria-label={n} $pressed={n === "filter" || n === "command"} $gap={n === "list" || n === "command"}>
              <Icon name={n} size={11} />
            </SideButton>
          ))}
        </SideBar>
      </Work>
      <Status>
        <StatusCell $line><span>694.1724,626.3993</span><span>@135.4897,362.6945</span></StatusCell>
        <StatusSplit>
          <StatusCell><span>935.0142&lt;42°</span><span>@387.1753&lt;70°</span></StatusCell>
          <StatusCell $right><span>Select entity or region</span><span>Move entity or reference</span></StatusCell>
        </StatusSplit>
        <MouseCell><Icon name="mouse" size={14} /></MouseCell>
        <StatusCell><span>Selected entities:</span><span>15 Points on Layer "Holes_Wire".</span></StatusCell>
      </Status>
      <TaskBar>
        <StartButton aria-label="Start"><Icon name="windows" size={8} /></StartButton>
        <SearchBox>
          <Icon name="cortana" size={12} />
          <SearchInput placeholder="Ask me anything" aria-label="Search" />
          <Icon name="mic" size={8} />
        </SearchBox>
        {apps.map((a) => (
          <TaskButton key={a.name} aria-label={a.name} $open={a.open} $active={a.active}><Icon name={a.name} size={11} /></TaskButton>
        ))}
        <Tray>
          <PeopleButton aria-label="People"><Icon name="people" size={8} /></PeopleButton>
          <Icon name="chevron" size={7} />
          <Icon name="network" size={8} />
          <Icon name="sound" size={8} />
          <Clock>07:55<br />15/03/2019</Clock>
          <NoticeButton aria-label="Notifications"><Icon name="action" size={10} /></NoticeButton>
        </Tray>
      </TaskBar>
    </Page>
  );
}
